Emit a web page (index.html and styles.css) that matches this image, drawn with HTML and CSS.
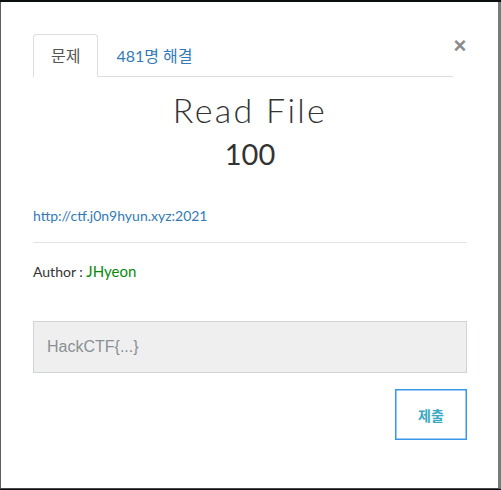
FILE: index.html
```html
<!DOCTYPE html>
<html lang="ko">
<head>
<meta charset="utf-8">
<title>Read File</title>
<link rel="stylesheet" href="styles.css">
</head>
<body>
<div class="modal">
  <div class="header">
    <ul class="tabs">
      <li class="tab active">문제</li>
      <li class="tab"><a href="#">481명 해결</a></li>
    </ul>
    <button class="close" type="button">&times;</button>
  </div>
  <h1 class="title">Read File</h1>
  <div class="score">100</div>
  <p class="desc"><a href="#">http://ctf.j0n9hyun.xyz:2021</a></p>
  <hr class="rule">
  <p class="author">Author : <span class="name">JHyeon</span></p>
  <form class="submit-form">
    <input class="flag" type="text" placeholder="HackCTF{...}">
    <div class="actions">
      <button class="submit" type="button">제출</button>
    </div>
  </form>
</div>
</body>
</html>
```

FILE: styles.css
```css
html, body {
  margin: 0;
  padding: 0;
  background: #0a0f10;
}
body {
  width: 501px;
  height: 490px;
  overflow: hidden;
}
.modal {
  box-sizing: border-box;
  margin-top: 2px;
  width: 501px;
  height: 487px;
  background: #fff;
  border-left: 1px solid #5e5e5e;
  border-right: 3px solid #7a7a7a;
  border-bottom: 1px solid #4a4a4a;
  padding: 32px 31px 0 32px;
  font-family: "Lato", "Noto Sans CJK KR", sans-serif;
  color: #333;
}
.header {
  display: flex;
  align-items: flex-start;
}
.tabs {
  flex: 1;
  display: flex;
  list-style: none;
  margin: 0;
  padding: 0;
  border-bottom: 1px solid #dddddd;
}
.tab {
  margin-bottom: -1px;
  padding: 10px 17px;
  line-height: 20px;
  font-size: 16px;
  font-family: "Noto Sans CJK KR", sans-serif;
  border: 1px solid transparent;
  border-radius: 4px 4px 0 0;
}
.tab + .tab {
  margin-left: 0;
}
.tab.active {
  color: #555;
  border-color: #dddddd;
  border-bottom-color: #fff;
  background: #fff;
}
.tab a {
  color: #337ab7;
  text-decoration: none;
  font-family: "Lato", "Noto Sans CJK KR", sans-serif;
}
.close {
  width: 14px;
  margin: 2px 0 0;
  padding: 0;
  border: 0;
  background: none;
  font-family: "Liberation Sans", sans-serif;
  font-size: 22px;
  font-weight: bold;
  line-height: 20px;
  color: #8a8a8a;
  text-align: center;
}
.title {
  margin: 14px 0 0;
  text-align: center;
  font-family: "Lato", sans-serif;
  font-weight: 300;
  font-size: 34px;
  letter-spacing: 2.3px;
  line-height: 38px;
  color: #333;
}
.score {
  margin-top: 8px;
  text-align: center;
  font-size: 29px;
  line-height: 34px;
  color: #333;
}
.desc {
  margin: 36px 0 0;
  font-size: 14px;
  line-height: 18px;
}
.desc a {
  color: #337ab7;
  text-decoration: none;
}
.rule {
  margin: 17px 0 0;
  border: 0;
  border-top: 1px solid #e3e3e3;
  height: 0;
}
.author {
  margin: 18px 0 0;
  font-size: 14px;
  line-height: 20px;
}
.name {
  color: #0a8a0a;
  font-size: 15px;
}
.submit-form {
  margin: 39px 0 0;
}
.flag {
  display: block;
  box-sizing: border-box;
  width: 100%;
  height: 52px;
  margin: 0;
  padding: 0 13px;
  background: #efefef;
  border: 1px solid #d0d4d9;
  font-family: "Liberation Sans", sans-serif;
  font-size: 16px;
  color: #555;
  outline: none;
}
.flag::placeholder {
  color: #8a8f94;
}
.actions {
  display: flex;
  justify-content: flex-end;
  margin-top: 16px;
}
.submit {
  box-sizing: border-box;
  width: 72px;
  height: 51px;
  background: #fff;
  border: 1px solid #3997ea;
  box-shadow: inset 0 0 0 0.5px #3997ea;
  font-family: "Noto Sans CJK KR", sans-serif;
  font-weight: bold;
  font-size: 14px;
  color: #3aaac4;
  padding: 0;
}
```
